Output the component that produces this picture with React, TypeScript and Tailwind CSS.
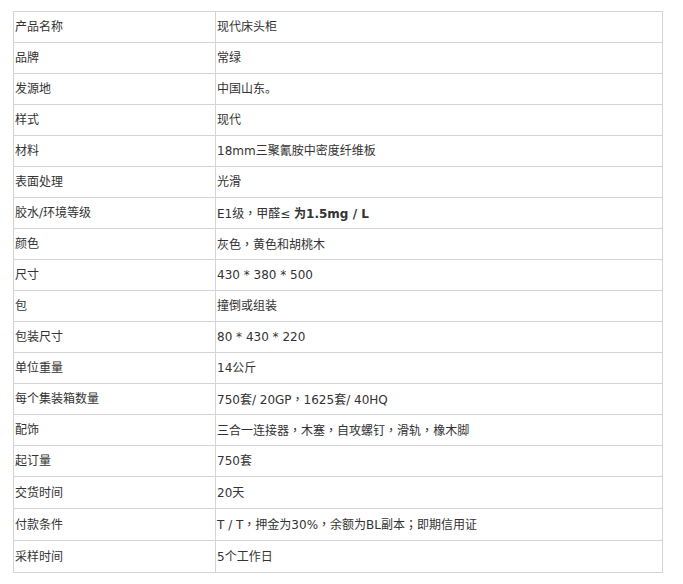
import React from 'react';

// full-width punctuation sits centred in the reference, as in the TC face
const P = ({ t }: { t: string }) => (
  <>
    {t.split(/([，；])/).map((s, i) =>
      s === '，' || s === '；' ? (
        <span key={i} style={{ fontFamily: '"Noto Sans CJK TC", sans-serif' }}>{s}</span>
      ) : (
        <React.Fragment key={i}>{s}</React.Fragment>
      )
    )}
  </>
);

const rows: [string, React.ReactNode][] = [
  ['产品名称', '现代床头柜'],
  ['品牌', '常绿'],
  ['发源地', '中国山东。'],
  ['样式', '现代'],
  ['材料', '18mm三聚氰胺中密度纤维板'],
  ['表面处理', '光滑'],
  ['胶水/环境等级', <>E1级<P t="，" />甲醛≤ <b>为1.5mg / L</b></>],
  ['颜色', <P t="灰色，黄色和胡桃木" />],
  ['尺寸', '430 * 380 * 500'],
  ['包', '撞倒或组装'],
  ['包装尺寸', '80 * 430 * 220'],
  ['单位重量', '14公斤'],
  ['每个集装箱数量', <P t="750套/ 20GP，1625套/ 40HQ" />],
  ['配饰', <P t="三合一连接器，木塞，自攻螺钉，滑轨，橡木脚" />],
  ['起订量', '750套'],
  ['交货时间', '20天'],
  ['付款条件', <P t="T / T，押金为30%，余额为BL副本；即期信用证" />],
  ['采样时间', '5个工作日'],
];

export default function App() {
  return (
    <div className="bg-white w-[683px] h-[584px] pt-[11px] pl-[13px]">
      <table
        className="border-collapse w-[650px] text-[12px] text-[#333]"
        style={{ fontFamily: '"DejaVu Sans", "Noto Sans CJK SC", sans-serif' }}
      >
        <tbody>
          {rows.map(([k, v], i) => (
            <tr key={k} className={i >= 15 ? 'h-[32px]' : 'h-[31px]'}>
              <td className="w-[202px] border border-[#d4d4d4] pl-px align-middle">{k}</td>
              <td className="border border-[#d4d4d4] pl-px align-middle">{v}</td>
            </tr>
          ))}
        </tbody>
      </table>
    </div>
  );
}
